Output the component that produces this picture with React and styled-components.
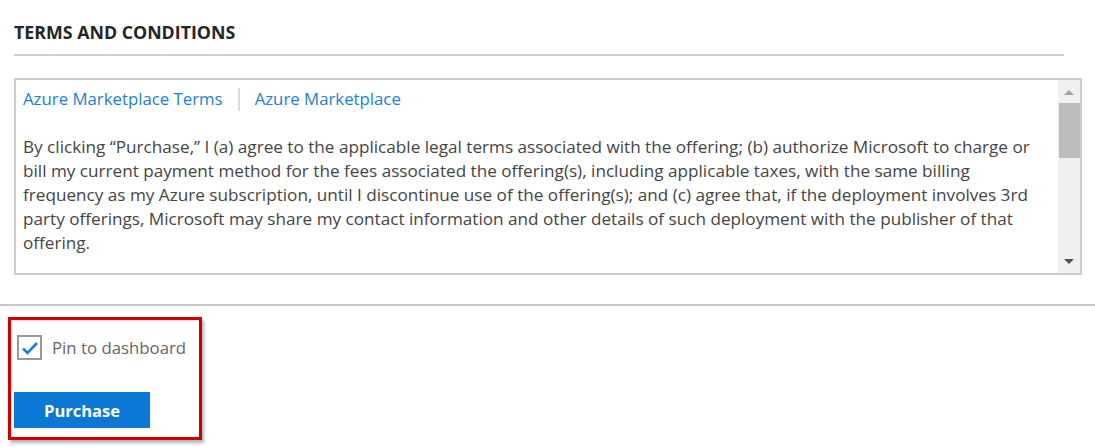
import styled, { createGlobalStyle } from "styled-components";

const GlobalStyle = createGlobalStyle`
  html, body {
    margin: 0;
    padding: 0;
    background: #ffffff;
  }
  body {
    font-family: "Open Sans", "Noto Sans", sans-serif;
    color: #444444;
  }
`;

const LEGAL_LINES = [
  "By clicking \u201CPurchase,\u201D I (a) agree to the applicable legal terms associated with the offering; (b) authorize Microsoft to charge or",
  "bill my current payment method for the fees associated the offering(s), including applicable taxes, with the same billing",
  "frequency as my Azure subscription, until I discontinue use of the offering(s); and (c) agree that, if the deployment involves 3rd",
  "party offerings, Microsoft may share my contact information and other details of such deployment with the publisher of that",
  "offering.",
];

export default function App() {
  return (
    <>
      <GlobalStyle />
      <Page>
        <Terms>
          <Heading>TERMS AND CONDITIONS</Heading>
          <TermsBox>
            <TermsContent>
              <LinkRow>
                <TermsLink href="#">Azure Marketplace Terms</TermsLink>
                <Divider />
                <TermsLink href="#">Azure Marketplace</TermsLink>
              </LinkRow>
              <Legal>
                {LEGAL_LINES.map((line, i) => (
                  <span key={i}>
                    {line}
                    {i < LEGAL_LINES.length - 1 && <br />}
                  </span>
                ))}
              </Legal>
            </TermsContent>
            <Scrollbar>
              <Arrow $dir="up" />
              <Thumb />
              <Arrow $dir="down" />
            </Scrollbar>
          </TermsBox>
        </Terms>

        <Footer>
          <Highlight>
            <CheckRow>
              <CheckBox>
                <svg width="18" height="14" viewBox="0 0 18 14">
                  <path
                    d="M2 7.5 L6.5 12 L16 2"
                    fill="none"
                    stroke="#1a7fd6"
                    strokeWidth="2.6"
                  />
                </svg>
              </CheckBox>
              <CheckLabel>Pin to dashboard</CheckLabel>
            </CheckRow>
            <PurchaseButton>Purchase</PurchaseButton>
          </Highlight>
        </Footer>
      </Page>
    </>
  );
}

const Page = styled.div`
  width: 1095px;
  height: 447px;
  overflow: hidden;
`;

const Terms = styled.div`
  padding: 21px 13px 29px 14px;
  border-bottom: 2px solid #c8c8c8;
`;

const Heading = styled.h2`
  margin: 0 18px 22px 0;
  padding-bottom: 10px;
  border-bottom: 2px solid #cfcfcf;
  font-family: "Open Sans", sans-serif;
  font-size: 17.8px;
  font-weight: 700;
  line-height: 23px;
  color: #262626;
`;

const TermsBox = styled.div`
  display: flex;
  height: 193px;
  border: 2px solid #cdcdcd;
`;

const TermsContent = styled.div`
  flex: 1;
  padding: 7px 0 0 7px;
`;

const LinkRow = styled.div`
  display: flex;
  align-items: center;
  height: 24px;
  margin-bottom: 24px;
`;

const TermsLink = styled.a`
  font-size: 16.8px;
  line-height: 24px;
  color: #1a7fd6;
  text-decoration: none;
`;

const Divider = styled.span`
  width: 2px;
  height: 23px;
  margin: 0 15px;
  background: #dcdcdc;
`;

const Legal = styled.p`
  margin: 0;
  font-size: 17.15px;
  line-height: 24px;
  color: #444444;
  white-space: nowrap;
`;

const Scrollbar = styled.div`
  width: 22px;
  background: #f0f0f0;
  display: flex;
  flex-direction: column;
  align-items: center;
`;

const Arrow = styled.div`
  width: 0;
  height: 0;
  border-left: 5px solid transparent;
  border-right: 5px solid transparent;
  ${(p) =>
    p.$dir === "up"
      ? `border-bottom: 5px solid #a3a3a3; margin: 10px 0 8px;`
      : `border-top: 5px solid #505050; margin: auto 0 9px;`}
`;

const Thumb = styled.div`
  width: 21px;
  height: 55px;
  background: #bdbdbd;
`;

const Footer = styled.div`
  padding: 11px 0 0 8px;
`;

const Highlight = styled.div`
  box-sizing: border-box;
  width: 194px;
  height: 123px;
  border: 3px solid #cc0000;
  box-shadow: 2px 3px 3px rgba(0, 0, 0, 0.3),
    inset 1px 1px 2px rgba(0, 0, 0, 0.15);
  padding: 15px 0 0 6px;
  display: flex;
  flex-direction: column;
`;

const CheckRow = styled.div`
  display: flex;
  align-items: center;
  gap: 10px;
`;

const CheckBox = styled.div`
  box-sizing: border-box;
  width: 25px;
  height: 25px;
  border: 2px solid #9a9a9a;
  display: flex;
  align-items: center;
  justify-content: center;
`;

const CheckLabel = styled.span`
  font-size: 16.8px;
  color: #666666;
`;

const PurchaseButton = styled.button`
  margin: 32px 0 0 -3px;
  width: 136px;
  height: 36px;
  border: none;
  background: #0b78d6;
  color: #ffffff;
  font-family: "Open Sans", sans-serif;
  font-size: 16.5px;
  font-weight: 700;
`;
